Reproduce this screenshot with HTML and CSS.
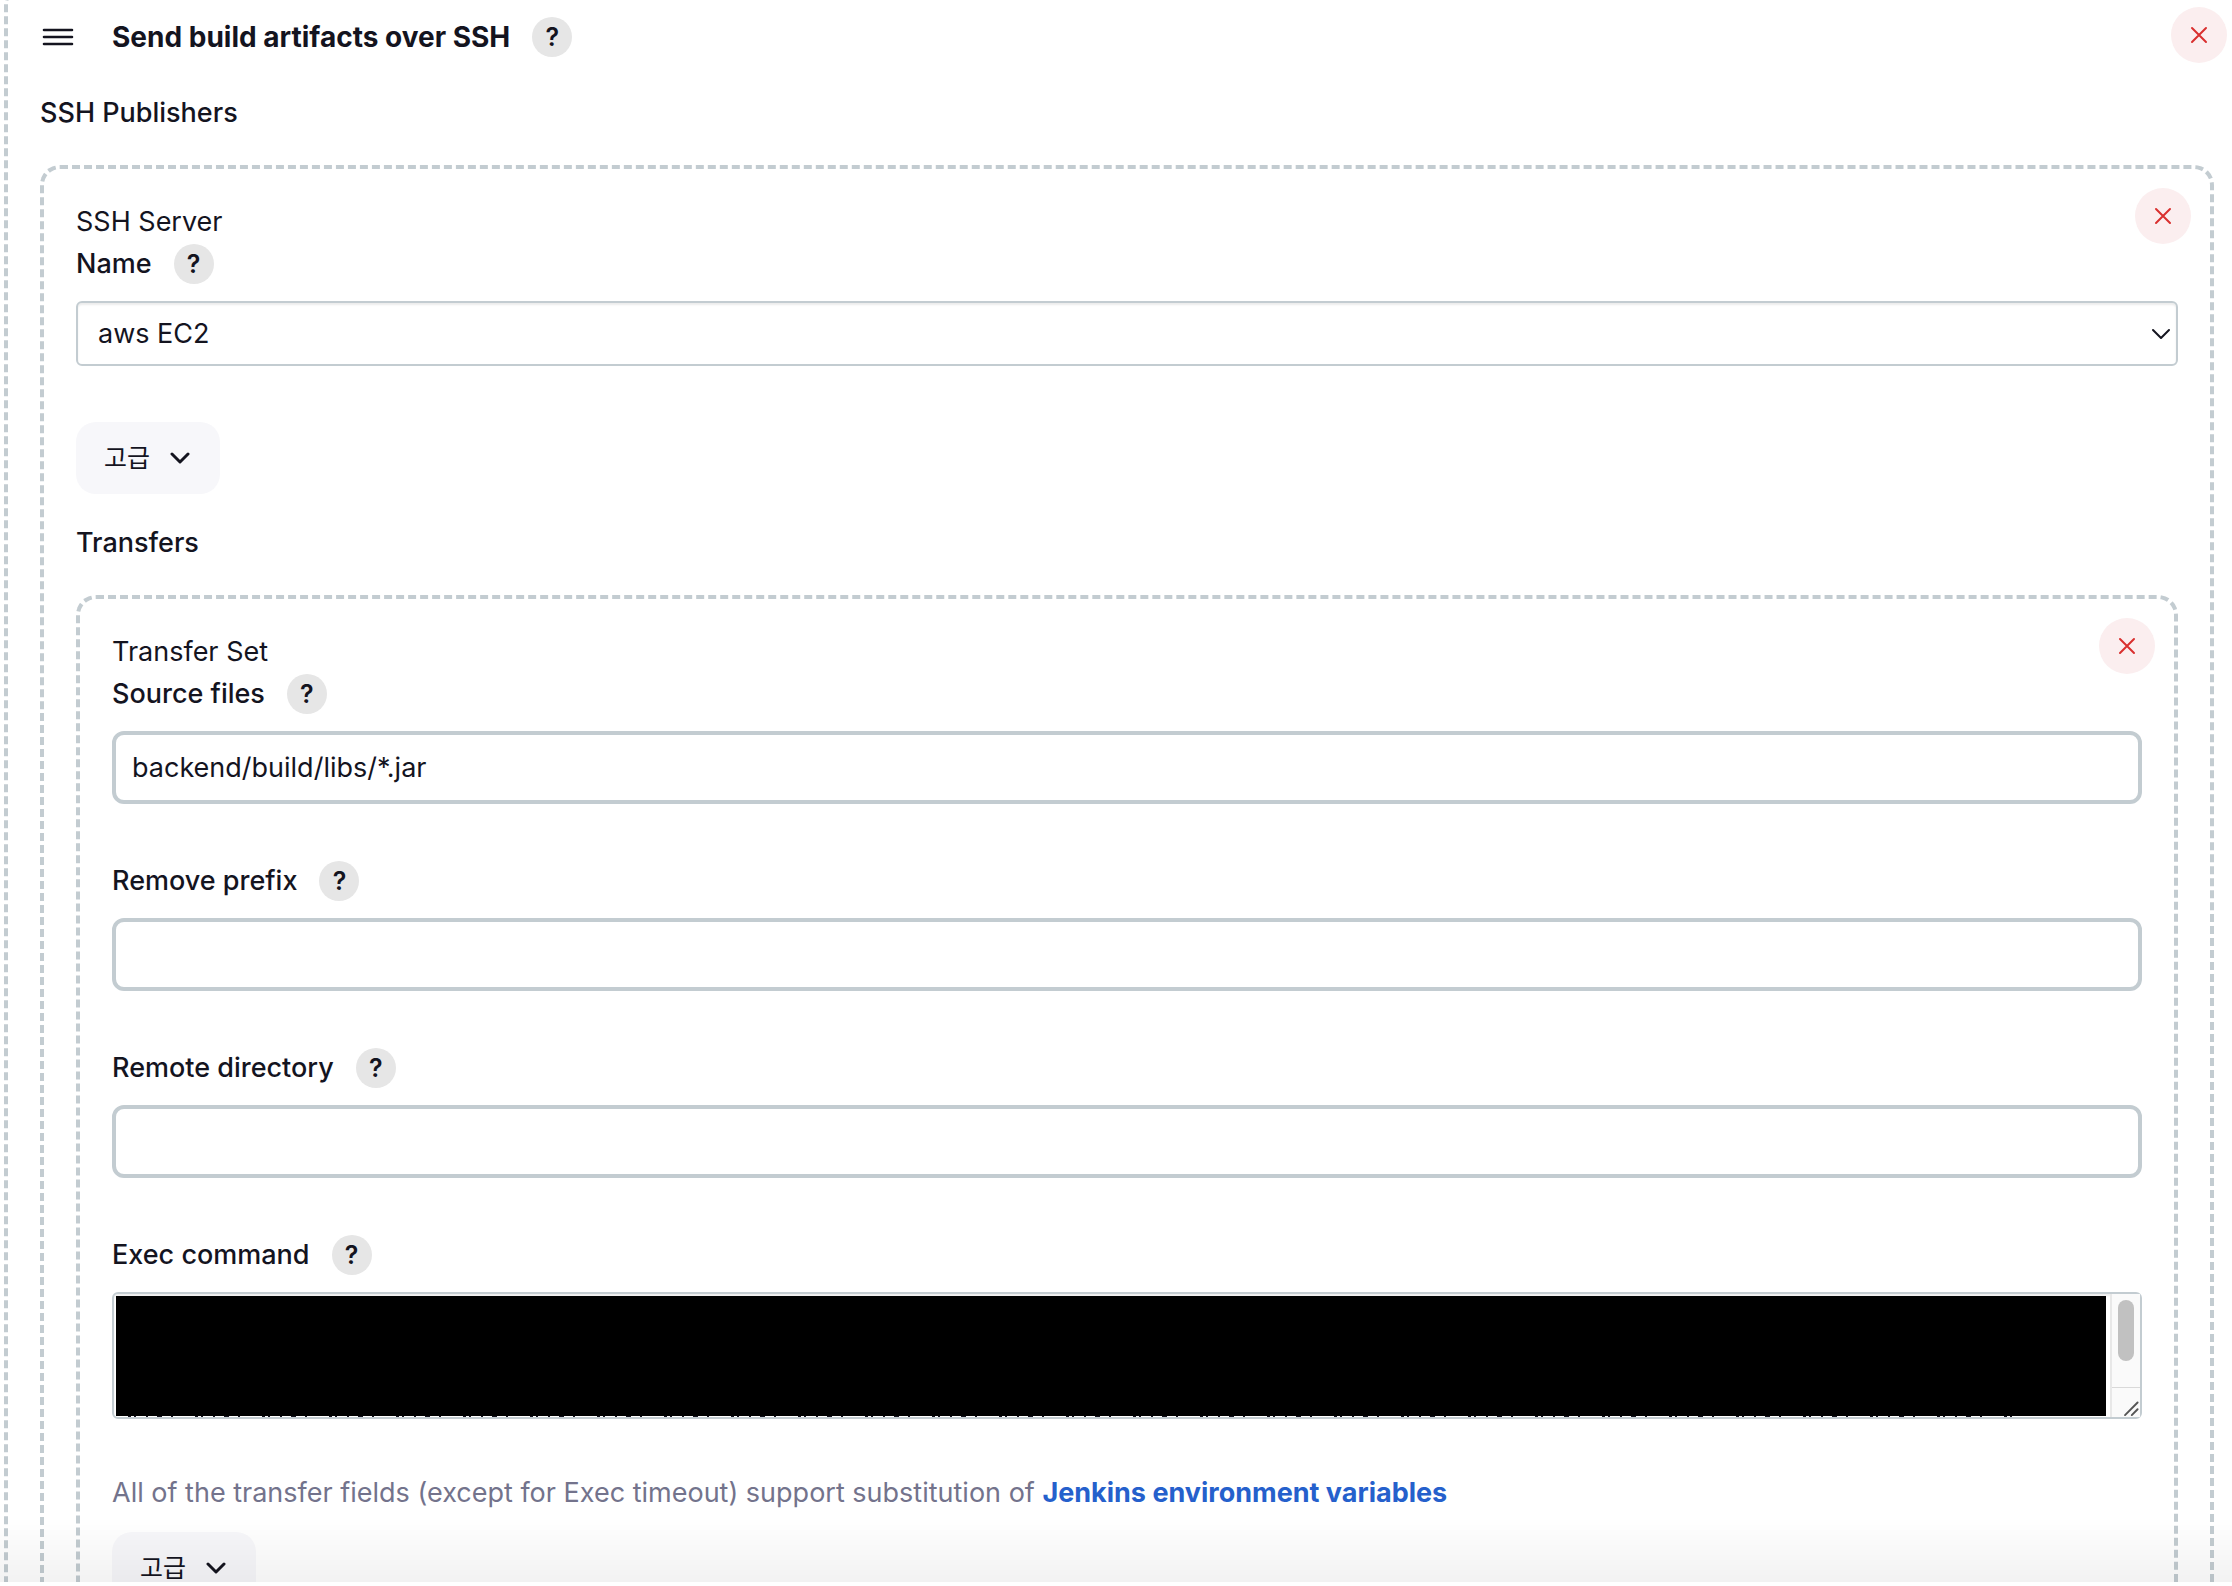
FILE: index.html
```html
<!DOCTYPE html>
<html lang="ko">
<head>
  <meta charset="UTF-8">
  <meta name="viewport" content="width=device-width, initial-scale=1">
  <title>Send build artifacts over SSH</title>
  <link rel="stylesheet" href="styles.css">
</head>
<body>
  <main class="chunk publisher">
    <!-- Build step header -->
    <div class="chunk-header">
      <button type="button" class="drag-handle" aria-label="Drag">
        <svg width="34" height="20" viewBox="0 0 34 20"><path d="M2 3h28M2 10h28M2 17h28"/></svg>
      </button>
      <h1 class="title">Send build artifacts over SSH</h1>
      <button type="button" class="help-button">?</button>
    </div>
    <button type="button" class="delete-button" aria-label="Delete">
      <svg width="18" height="18" viewBox="0 0 18 18"><path d="M2 2l14 14M16 2L2 16"/></svg>
    </button>

    <h2 class="section-label">SSH Publishers</h2>

    <!-- SSH server -->
    <section class="chunk">
      <button type="button" class="delete-button" aria-label="Delete">
        <svg width="18" height="18" viewBox="0 0 18 18"><path d="M2 2l14 14M16 2L2 16"/></svg>
      </button>
      <p class="chunk-name">SSH Server</p>
      <div class="field">
        <div class="field-label">
          <label for="serverName">Name</label>
          <button type="button" class="help-button">?</button>
        </div>
        <div class="select-wrap">
          <select id="serverName" class="select">
            <option>aws EC2</option>
          </select>
          <svg class="select-arrow" width="20" height="12" viewBox="0 0 20 12"><path d="M2 2l8 8 8-8"/></svg>
        </div>
      </div>

      <button type="button" class="advanced-button">
        고급
        <svg width="20" height="12" viewBox="0 0 20 12"><path d="M2 2l8 8 8-8"/></svg>
      </button>

      <h3 class="section-label">Transfers</h3>

      <!-- Transfer set -->
      <section class="chunk">
        <button type="button" class="delete-button" aria-label="Delete">
          <svg width="18" height="18" viewBox="0 0 18 18"><path d="M2 2l14 14M16 2L2 16"/></svg>
        </button>
        <p class="chunk-name">Transfer Set</p>
        <div class="field">
          <div class="field-label">
            <label for="sourceFiles">Source files</label>
            <button type="button" class="help-button">?</button>
          </div>
          <input type="text" id="sourceFiles" class="input" value="backend/build/libs/*.jar">
        </div>
        <div class="field">
          <div class="field-label">
            <label for="removePrefix">Remove prefix</label>
            <button type="button" class="help-button">?</button>
          </div>
          <input type="text" id="removePrefix" class="input">
        </div>
        <div class="field">
          <div class="field-label">
            <label for="remoteDirectory">Remote directory</label>
            <button type="button" class="help-button">?</button>
          </div>
          <input type="text" id="remoteDirectory" class="input">
        </div>
        <div class="field exec-field">
          <div class="field-label">
            <label for="execCommand">Exec command</label>
            <button type="button" class="help-button">?</button>
          </div>
          <div class="exec-wrap">
            <textarea id="execCommand" class="textarea"></textarea>
            <div class="exec-mask"></div>
            <div class="scrollbar">
              <div class="scroll-thumb"></div>
              <svg class="resizer" width="28" height="30" viewBox="0 0 28 30"><path d="M13 28L26 15M20 28l6-6"/></svg>
            </div>
          </div>
        </div>

        <p class="description">All of the transfer fields (except for Exec timeout) support substitution of <a href="#">Jenkins environment variables</a></p>

        <button type="button" class="advanced-button">
          고급
          <svg width="20" height="12" viewBox="0 0 20 12"><path d="M2 2l8 8 8-8"/></svg>
        </button>
      </section>
    </section>
  </main>
  <div class="bottom-bar"></div>
</body>
</html>
```
FILE: styles.css
```css
* {
  margin: 0;
  padding: 0;
  box-sizing: border-box;
}
html {
  height: 100%;
  overflow: hidden;
}
body {
  height: 100%;
  overflow-x: hidden;
  overflow-y: auto;
  scrollbar-width: none;
  font-family: Inter, "Noto Sans CJK KR", sans-serif;
  font-size: 27px;
  line-height: 42px;
  color: #14141f;
  background-color: #fff;
}
button, input, select, textarea {
  font: inherit;
  color: inherit;
}
button {
  border: none;
  cursor: pointer;
}
svg {
  display: block;
  fill: none;
  stroke: currentColor;
  stroke-width: 2;
  stroke-linecap: round;
  stroke-linejoin: round;
}

/* Dashed containers */
.chunk {
  position: relative;
  padding: 32px;
  border: 4px dashed #c3ccd1;
  border-radius: 20px;
}
/* The outer box runs past the top and right of the window */
.publisher {
  margin: -16px -18px 0 4px;
  padding-top: 28px;
}
.chunk-header {
  display: flex;
  align-items: center;
  margin-bottom: 34px;
}
.drag-handle {
  width: 72px;
  padding-left: 2px;
  background: none;
}
.drag-handle svg {
  stroke-width: 2.6;
}
.title {
  font-size: 28px;
  font-weight: 700;
}
.section-label {
  margin-bottom: 31px;
  font-size: 27px;
  font-weight: 500;
}

/* Round buttons */
.help-button {
  width: 40px;
  height: 40px;
  margin-left: 22px;
  border-radius: 50%;
  background-color: #e6e6e6;
  font-size: 25px;
  font-weight: 600;
  line-height: 40px;
}
.delete-button {
  position: absolute;
  top: 19px;
  right: 19px;
  display: flex;
  align-items: center;
  justify-content: center;
  width: 56px;
  height: 56px;
  border-radius: 50%;
  background-color: #fbeeef;
  color: #d9302f;
}

/* Fields */
.field {
  margin-bottom: 56px;
}
.field-label {
  display: flex;
  align-items: center;
  margin-bottom: 16px;
  font-weight: 500;
}
.input {
  display: block;
  width: 100%;
  height: 73px;
  padding: 0 16px;
  border: 4px solid #c3ccd1;
  border-radius: 12px;
  background-color: #fff;
}
.select-wrap {
  position: relative;
}
.select {
  display: block;
  width: 100%;
  height: 65px;
  padding: 0 20px;
  border: 2px solid #c3ccd1;
  border-radius: 6px;
  background-color: #fff;
  box-shadow: inset 0 2px 2px rgba(0, 0, 0, 0.08);
  appearance: none;
}
.select-arrow {
  position: absolute;
  top: 27px;
  right: 7px;
  pointer-events: none;
}
.exec-field {
  margin-bottom: 53px;
}
.exec-wrap {
  position: relative;
}
.textarea {
  display: block;
  width: 100%;
  height: 127px;
  padding: 12px;
  border: 2px solid #c3ccd1;
  border-radius: 6px;
  background-color: #fff;
  box-shadow: inset 0 2px 2px rgba(0, 0, 0, 0.08);
  resize: none;
}
/* Hides the command text */
.exec-mask {
  position: absolute;
  top: 4px;
  right: 36px;
  bottom: 3px;
  left: 4px;
  background-color: #000;
}
/* Tops of the last line peeking out under the mask */
.exec-mask::after {
  content: "";
  position: absolute;
  top: 100%;
  right: 94px;
  left: 12px;
  height: 1px;
  background: repeating-linear-gradient(90deg, #14141f 0 3px, transparent 3px 6px, #14141f 6px 8px, transparent 8px 18px, #14141f 18px 20px, transparent 20px 29px, #14141f 29px 34px, transparent 34px 43px, #14141f 43px 45px, transparent 45px 67px);
}
.scrollbar {
  position: absolute;
  top: 2px;
  right: 2px;
  bottom: 2px;
  width: 30px;
  border-left: 2px solid #e8e8e8;
  background-color: #fafafa;
}
.scroll-thumb {
  width: 16px;
  height: 61px;
  margin: 6px;
  border-radius: 8px;
  background-color: #c1c1c1;
}
.resizer {
  position: absolute;
  right: 0;
  bottom: 0;
  border-top: 1px solid #d9d9d9;
  color: #555;
}

.description {
  margin-bottom: 18px;
  color: #73738c;
}
.description a {
  color: #2560cc;
  font-weight: 700;
  text-decoration: none;
}
.advanced-button {
  display: flex;
  align-items: center;
  gap: 20px;
  height: 72px;
  margin-bottom: 28px;
  padding: 0 30px 0 28px;
  border-radius: 20px;
  background-color: #f7f7fa;
  font-size: 25px;
  font-weight: 400;
}
.advanced-button svg {
  stroke-width: 3;
}

/* Sticky bar at the bottom, only its edge and shadow show */
.bottom-bar {
  position: fixed;
  right: 0;
  bottom: 0;
  left: 0;
  height: 4px;
  background-color: #fff;
}
.bottom-bar::before {
  content: "";
  position: absolute;
  right: 0;
  bottom: 4px;
  left: 0;
  height: 64px;
  background: linear-gradient(rgba(0, 0, 0, 0), rgba(0, 0, 0, 0.05));
}
```
